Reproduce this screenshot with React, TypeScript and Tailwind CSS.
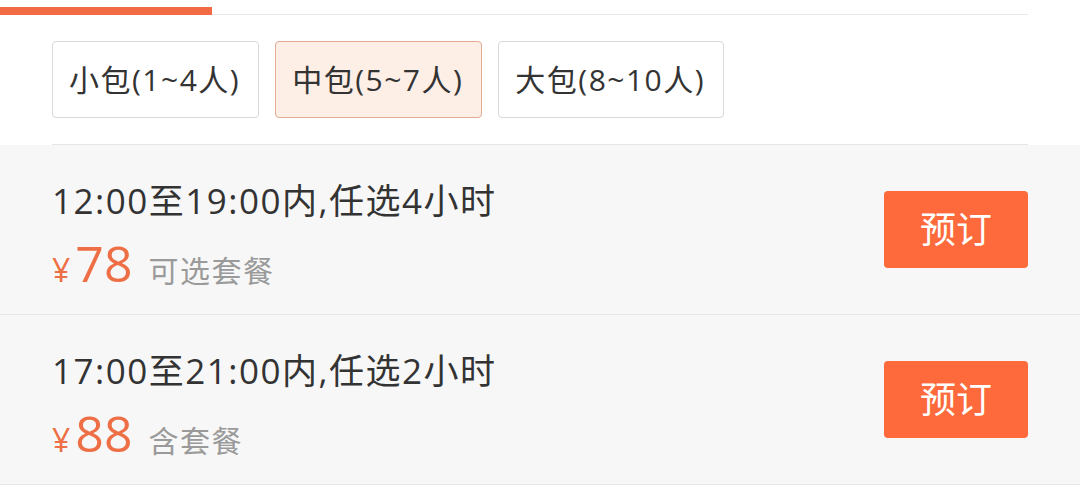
const FONT = "font-['Open_Sans','Noto_Sans_CJK_SC',sans-serif]"

const sizes = [
  { label: '小包(1~4人)', active: false },
  { label: '中包(5~7人)', active: true },
  { label: '大包(8~10人)', active: false },
]

const plans = [
  { time: '12:00至19:00内,任选4小时', price: '78', note: '可选套餐' },
  { time: '17:00至21:00内,任选2小时', price: '88', note: '含套餐' },
]

function SizeChip({ label, active }: { label: string; active: boolean }) {
  return (
    <button
      className={
        'h-[77px] pl-[16px] pr-[18px] rounded-[4px] border text-[30px] tracking-[1.5px] text-[#333] flex items-center ' +
        (active ? 'bg-[#fdeee6] border-[#e2ab94]' : 'bg-white border-[#d9d9d9]')
      }
    >
      {label}
    </button>
  )
}

function PlanRow({ time, price, note }: { time: string; price: string; note: string }) {
  return (
    <div className="h-[170px] flex items-start justify-between pl-[52px] pr-[52px] border-b border-[#e6e6e6]">
      <div className="flex flex-col pt-[32px]">
        <p className="text-[35px] leading-[48px] tracking-[1.5px] text-[#333]">{time}</p>
        <p className="mt-[10px] leading-[56px] whitespace-nowrap">
          <span className="text-[32px] text-[#ee6f45] mr-[5px]">¥</span>
          <span className="text-[50px] text-[#ee6f45]">{price}</span>
          <span className="text-[30px] tracking-[1.5px] text-[#9a9a9a] ml-[16px]">{note}</span>
        </p>
      </div>
      <button className="self-center w-[144px] h-[77px] rounded-[4px] bg-[#fe6a3b] text-white text-[36px] flex items-center justify-center">
        预订
      </button>
    </div>
  )
}

export default function App() {
  return (
    <div className={`w-[1080px] h-[488px] bg-white overflow-hidden ${FONT}`}>
      {/* tab indicator */}
      <div className="h-[15px] flex items-end">
        <div className="w-[212px] h-[8px] bg-[#f26b45]" />
        <div className="w-[816px] h-px bg-[#e8e8e8]" />
      </div>

      <div className="flex gap-[16px] px-[52px] pt-[26px] pb-[26px]">
        {sizes.map(s => (
          <SizeChip key={s.label} {...s} />
        ))}
      </div>

      <div className="ml-[52px] mr-[52px] h-px bg-[#e6e6e6]" />

      <div className="bg-[#f7f7f7]">
        {plans.map(p => (
          <PlanRow key={p.time} {...p} />
        ))}
      </div>
    </div>
  )
}
